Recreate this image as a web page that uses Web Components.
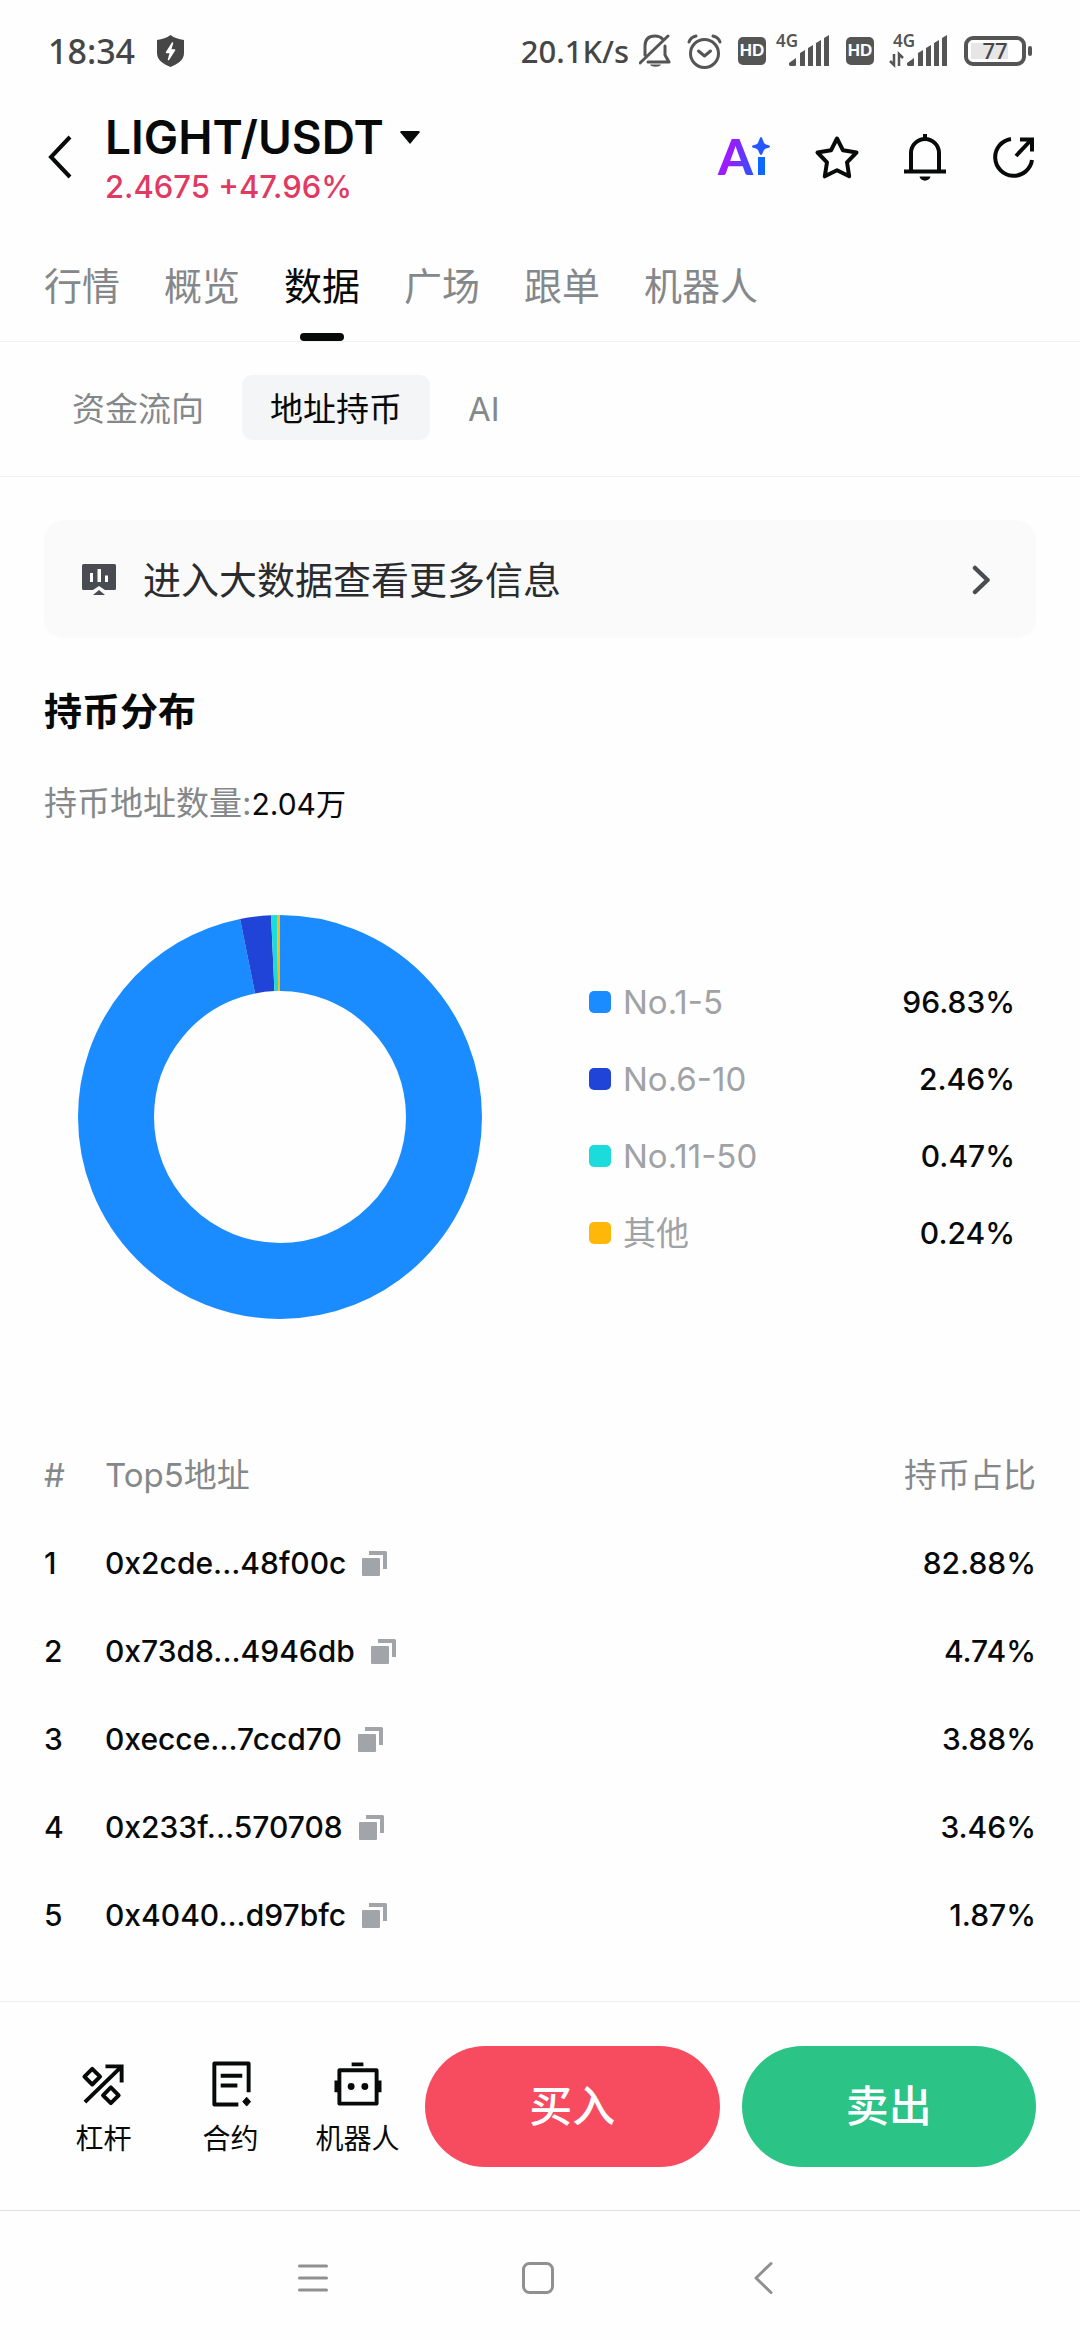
<!DOCTYPE html>
<html lang="zh-CN">
<head>
<meta charset="utf-8">
<meta name="viewport" content="width=device-width, initial-scale=1">
<title>LIGHT/USDT</title>
<style>
  body { margin: 0; background: #fefefe; color: #080a0a; font-family: Inter, "Noto Sans CJK SC", sans-serif; }
</style>
</head>
<body>
<app-screen>
  <status-bar slot="top" time="18:34" speed="20.1K/s" battery="77"></status-bar>
  <pair-header slot="top" price="2.4675" change="+47.96%">LIGHT/USDT</pair-header>
  <tab-bar slot="top">
    <tab-item>行情</tab-item>
    <tab-item>概览</tab-item>
    <tab-item selected>数据</tab-item>
    <tab-item>广场</tab-item>
    <tab-item>跟单</tab-item>
    <tab-item>机器人</tab-item>
  </tab-bar>
  <pill-bar slot="top">
    <pill-item>资金流向</pill-item>
    <pill-item selected>地址持币</pill-item>
    <pill-item>AI</pill-item>
  </pill-bar>

  <promo-link>进入大数据查看更多信息</promo-link>
  <holder-section count="2.04万">
    <span slot="title">持币分布</span>
    <span slot="label">持币地址数量:</span>
    <share-row value="96.83" color="#1a8cff">No.1-5</share-row>
    <share-row value="2.46" color="#2043d8">No.6-10</share-row>
    <share-row value="0.47" color="#1bdbdb">No.11-50</share-row>
    <share-row value="0.24" color="#ffb70a">其他</share-row>
  </holder-section>
  <address-table></address-table>

  <trade-bar slot="bottom">
    <quick-action icon="lever">杠杆</quick-action>
    <quick-action icon="contract">合约</quick-action>
    <quick-action icon="robot">机器人</quick-action>
    <trade-button slot="trade" kind="buy">买入</trade-button>
    <trade-button slot="trade" kind="sell">卖出</trade-button>
  </trade-bar>
  <system-nav slot="bottom"></system-nav>
</app-screen>

<script>
const RESET = `
  :host, *, *::before, *::after { box-sizing: border-box; }
  button, a { font: inherit; color: inherit; background: none; border: 0; margin: 0; padding: 0; text-decoration: none; cursor: pointer; }
  svg { display: block; flex: none; }
`;

function define(name, render) {
  customElements.define(name, class extends HTMLElement {
    connectedCallback() {
      if (this.shadowRoot) return;
      const template = document.createElement('template');
      template.innerHTML = render(this);
      this.attachShadow({ mode: 'open' }).append(template.content.cloneNode(true));
    }
  });
}

define('app-screen', () => `
  <style>${RESET}
    :host { display: flex; flex-direction: column; min-height: 100vh; }
    main { flex: 1; padding: 43px 44px 0; }
  </style>
  <header><slot name="top"></slot></header>
  <main><slot></slot></main>
  <footer><slot name="bottom"></slot></footer>`);

/* ---------- status bar ---------- */
define('status-bar', el => `
  <style>${RESET}
    :host { display: flex; align-items: center; justify-content: space-between; height: 102px; padding: 0 48px;
      color: #464646; font: 500 34px/40px "Noto Sans", sans-serif; }
    .group { display: flex; align-items: center; gap: 16px; }
    .tight { display: flex; align-items: center; gap: 10px; }
    .left { gap: 22px; }
    .speed { font-size: 31px; }
  </style>
  <div class="group left">
    <span>${el.getAttribute('time')}</span>
    <svg width="27" height="32" viewBox="0 0 27 32"><path d="M13.500 0c4 3 8 4.300 13.500 5v13c0 7-6 11-13.500 14C6 29 0 25 0 18V5c5.500-.7 9.500-2 13.500-5z" fill="#464646"/><path d="M15.500 8l-6 9.500h4l-2 7 6-9.500h-4z" fill="#fff" stroke="#fff" stroke-width="1.500" stroke-linejoin="round"/></svg>
  </div>
  <div class="group">
    <div class="tight">
      <span class="speed">${el.getAttribute('speed')}</span>
      <svg width="32" height="34" viewBox="0 0 32 34" fill="none" stroke="#555" stroke-width="3"><path d="M6 21V12C6 5 10 2 16 2c3.500 0 6 1.200 7.600 3M26 12v9l4 7H9M1 29L29 2" stroke-linecap="round" stroke-linejoin="round"/><path d="M11 30.500h11c-1 3-10 3-11 0z" fill="#555" stroke="none"/></svg>
    </div>
    <svg width="35" height="35" viewBox="0 0 35 35" fill="none" stroke="#555" stroke-width="3" stroke-linecap="round" stroke-linejoin="round"><circle cx="17.500" cy="19.500" r="14"/><path d="M11.500 17l6 5 6-5M2 8c1-3 3-5 7-6M33 8c-1-3-3-5-7-6"/></svg>
    <div class="tight"><hd-badge></hd-badge><cell-signal></cell-signal></div>
    <div class="tight"><hd-badge></hd-badge><cell-signal data></cell-signal></div>
    <svg width="68" height="30" viewBox="0 0 68 30"><rect x="2" y="2" width="58" height="26" rx="7" fill="none" stroke="#555" stroke-width="4"/><rect x="7" y="7" width="37" height="16" rx="1" fill="#e6e6e6"/><rect x="64" y="10" width="4" height="10" rx="2" fill="#555"/><text x="31" y="23" text-anchor="middle" font-family="Noto Sans" font-size="22" fill="#464646">${el.getAttribute('battery')}</text></svg>
  </div>`);

define('hd-badge', () => `
  <style>${RESET}
    :host { display: grid; place-items: center; width: 28px; height: 28px; border-radius: 5px; background: #555;
      color: #fff; font: 700 17px/28px "Liberation Sans", sans-serif; }
  </style>HD`);

define('cell-signal', el => {
  const data = el.hasAttribute('data');
  const w = data ? 64 : 54;
  return `
  <style>${RESET} :host { display: block; }</style>
  <svg width="${w}" height="50" viewBox="${data ? -10 : 0} -8 ${w} 50" fill="#555">
    <text x="${data ? -1 : 0}" y="13" font-family="Noto Sans" font-weight="600" font-size="17">4G</text>
    <path d="M13 31v-2l7-5v7a1 1 0 0 1-1 1h-5zM24 19l5-3v16h-5zM32 14l5-3v21h-5zM40 9l5-3v26h-5zM48 4l5-3v31h-5z"/>
    ${data ? '<path d="M0 20v11l-4-4M5 32V20l4 4" fill="none" stroke="#555" stroke-width="2.500"/>' : ''}
  </svg>`;
});

/* ---------- pair header ---------- */
define('pair-header', el => `
  <style>${RESET}
    :host { display: flex; align-items: center; height: 110px; padding: 0 44px 0 46px; }
    .back { padding-right: 31px; }
    .pair { flex: 1; }
    .name { display: flex; align-items: center; gap: 16px; font-size: 46px; font-weight: 600; line-height: 60px; }
    .quote { font-size: 31px; font-weight: 500; line-height: 40px; color: #e03a62; }
    .tools { display: flex; align-items: center; gap: 44px; }
    .tools button { display: block; }
  </style>
  <button class="back" aria-label="返回"><svg width="28" height="46" viewBox="0 0 28 46" fill="none" stroke="#080a0a" stroke-width="4"><path d="M24 3L5 23l19 20"/></svg></button>
  <div class="pair">
    <button class="name"><slot></slot><svg width="20" height="13" viewBox="0 0 20 13"><path d="M1 0h18l1 1-10 12L0 1z" fill="#080a0a"/></svg></button>
    <div class="quote">${el.getAttribute('price')} ${el.getAttribute('change')}</div>
  </div>
  <div class="tools">
    <button aria-label="Ai"><svg width="54" height="64" viewBox="-2 -9 54 64"><defs><linearGradient id="g" gradientUnits="userSpaceOnUse" x1="0" y1="20" x2="48" y2="28"><stop offset=".25" stop-color="#9a1cff"/><stop offset=".9" stop-color="#0e62ff"/></linearGradient></defs><text x="0" y="41" font-family="Lato" font-weight="900" font-size="50" fill="url(#g)">A</text><rect x="40" y="23" width="7" height="18" fill="#0e68ff"/><path d="M43 3c1.500 0 2 5 3.500 6.500S52 11 52 12.500s-4 1.500-5.500 3S44.500 21 43 21s-2-4-3.500-5.500-5.500-1.500-5.500-3 4-1.500 5.500-3S41.500 3 43 3z" fill="#2457ff"/></svg></button>
    <button aria-label="收藏"><svg width="46" height="46" viewBox="0 0 46 46" fill="none" stroke="#080a0a" stroke-width="4" stroke-linejoin="round"><path d="M23 4.500l6 11.800 13.500 2.200-9.500 9.800 2.200 14L23 36.300l-12.200 6 2.200-14-9.500-9.800L17 16.300z"/></svg></button>
    <button aria-label="提醒"><svg width="42" height="48" viewBox="0 0 42 48" fill="none" stroke="#080a0a" stroke-width="4"><path d="M7 38V20a14 14 0 0 1 28 0v18M0 38.500h42M21 1v6"/><path d="M15.500 43.500h11c-1 5.500-10 5.500-11 0z" fill="#080a0a" stroke="none"/></svg></button>
    <button aria-label="分享"><svg width="46" height="46" viewBox="0 0 46 46" fill="none" stroke="#080a0a" stroke-width="4"><path d="M21 5A18.500 18.500 0 1 0 42 26M26 22L41 6M30 5.500h12v12"/></svg></button>
  </div>`);

/* ---------- tabs ---------- */
define('tab-bar', () => `
  <style>${RESET}
    :host { display: block; border-bottom: 1px solid #eeeff0; }
    nav { display: flex; gap: 44px; padding: 48px 44px 0; }
  </style>
  <nav><slot></slot></nav>`);

define('tab-item', () => `
  <style>${RESET}
    :host { display: block; color: #85888a; }
    :host([selected]) { color: #080a0a; }
    button { display: flex; flex-direction: column; align-items: center; gap: 21px; font-size: 38px; line-height: 52px; white-space: nowrap; }
    button::after { content: ""; width: 44px; height: 8px; border-radius: 4px; }
    :host([selected]) button::after { background: #080a0a; }
  </style>
  <button><slot></slot></button>`);

define('pill-bar', () => `
  <style>${RESET}
    :host { display: block; border-bottom: 1px solid #eeeff0; }
    nav { display: flex; gap: 10px; padding: 33px 44px 36px; }
  </style>
  <nav><slot></slot></nav>`);

define('pill-item', () => `
  <style>${RESET}
    :host { display: block; color: #85888a; }
    button { padding: 3px 28px 0; border-radius: 10px; font-size: 33px; line-height: 62px; white-space: nowrap; }
    :host([selected]) { color: #080a0a; }
    :host([selected]) button { background: #f3f5f6; }
  </style>
  <button><slot></slot></button>`);

/* ---------- link card ---------- */
define('promo-link', () => `
  <style>${RESET}
    :host { display: block; }
    a { display: flex; align-items: center; gap: 27px; height: 118px; padding: 2px 44px 0 38px; border-radius: 20px; background: #fafafa; color: #2a2c2f; font-size: 38px; line-height: 52px; }
    span { flex: 1; }
  </style>
  <a href="#">
    <svg width="34" height="32" viewBox="0 0 34 32"><path d="M1.500 0h31A1.500 1.500 0 0 1 34 1.500v23A1.500 1.500 0 0 1 32.500 26H23l-6-4-6 4H1.500A1.500 1.500 0 0 1 0 24.500v-23A1.500 1.500 0 0 1 1.500 0z" fill="#494b52"/><path d="M17 26l6 5H11z" fill="#494b52"/><path d="M8 9h3v9H8zM15.500 5h3.500v13h-3.500zM23 11.500h3V18h-3z" fill="#fff"/></svg>
    <span><slot></slot></span>
    <svg width="20" height="30" viewBox="0 0 20 30" fill="none" stroke="#494b4f" stroke-width="4.500" stroke-linecap="round" stroke-linejoin="round"><path d="M3 3l12.500 12L3 27"/></svg>
  </a>`);

/* ---------- distribution chart ---------- */
define('holder-section', el => {
  let start = 0;
  const arcs = [...el.querySelectorAll('share-row')].map(row => {
    const value = Number(row.getAttribute('value'));
    const arc = `<circle cx="202" cy="202" r="164" pathLength="100" stroke="${row.getAttribute('color')}" stroke-dasharray="${value} ${100 - value}" stroke-dashoffset="${-start}"/>`;
    start += value;
    return arc;
  }).join('');
  return `
  <style>${RESET}
    :host { display: block; }
    h2 { margin: 49px 0 0; font-size: 38px; font-weight: 700; line-height: 48px; }
    p { display: flex; align-items: baseline; height: 40px; margin: 48px 0 0; font-size: 33px; line-height: 40px; color: #85888a; }
    b { font-size: 30px; font-weight: 400; color: #080a0a; }
    .chart { display: flex; align-items: center; justify-content: space-between; gap: 107px; margin-top: 92px; padding: 0 21px 0 34px; }
    .rows { flex: 1; display: grid; }
  </style>
  <h2><slot name="title"></slot></h2>
  <p><slot name="label"></slot><b>${el.getAttribute('count')}</b></p>
  <div class="chart">
    <svg width="404" height="404" viewBox="0 0 404 404" fill="none" stroke-width="76"><g transform="rotate(-90 202 202)">${arcs}</g></svg>
    <div class="rows"><slot></slot></div>
  </div>`;
});

define('share-row', el => `
  <style>${RESET}
    :host { display: flex; align-items: center; gap: 12px; height: 77px; font-size: 33px; line-height: 40px; }
    i { width: 22px; height: 22px; border-radius: 5px; background: ${el.getAttribute('color')}; }
    .label { flex: 1; color: #a0a2a5; }
    .value { font-size: 30px; font-weight: 500; }
  </style>
  <i></i><span class="label"><slot></slot></span><span class="value">${el.getAttribute('value')}%</span>`);

/* ---------- top addresses ---------- */
const HOLDERS = [
  ['0x2cde...48f00c', '82.88%'],
  ['0x73d8...4946db', '4.74%'],
  ['0xecce...7ccd70', '3.88%'],
  ['0x233f...570708', '3.46%'],
  ['0x4040...d97bfc', '1.87%'],
];

define('address-table', () => `
  <style>${RESET}
    :host { display: block; margin-top: 112px; }
    table { width: 100%; border-collapse: collapse; line-height: 40px; }
    th, td { height: 88px; padding: 0; text-align: left; font-size: 30px; font-weight: 500; }
    th { font-size: 33px; font-weight: 400; color: #85888a; }
    th:first-child { width: 61px; }
    th:last-child, td:last-child { text-align: right; }
    .addr { display: flex; align-items: center; gap: 16px; }
  </style>
  <table>
    <thead><tr><th>#</th><th>Top5地址</th><th>持币占比</th></tr></thead>
    <tbody>${HOLDERS.map(([addr, share], i) => `
      <tr><td>${i + 1}</td><td><div class="addr">${addr}<copy-button></copy-button></div></td><td>${share}</td></tr>`).join('')}
    </tbody>
  </table>`);

define('copy-button', () => `
  <style>${RESET} :host { display: block; } button { display: block; }</style>
  <button aria-label="复制"><svg width="25" height="26" viewBox="0 0 25 26" fill="#a1a4a8"><rect x="0" y="8" width="18" height="18" rx="1"/><path d="M7 1h16.500A1.500 1.500 0 0 1 25 2.500V19h-4V5H7z"/></svg></button>`);

/* ---------- bottom bars ---------- */
define('trade-bar', () => `
  <style>${RESET}
    :host { display: flex; align-items: center; height: 209px; padding: 0 44px 0 40px; border-top: 1px solid #eeeff0; }
    .actions { display: grid; grid-template-columns: repeat(3, 127px); margin-right: 4px; }
    .trade { flex: 1; display: flex; gap: 22px; }
  </style>
  <div class="actions"><slot></slot></div>
  <div class="trade"><slot name="trade"></slot></div>`);

const ACTION_ICONS = {
  lever: '<path d="M5 43L42 7M26 6.500h16.500V23" /><path d="M12.500 9l8 8-8 8-8-8zM31.500 28l8 8-8 8-8-8z" stroke-linejoin="round"/>',
  contract: '<path d="M42.500 33V3.500h-35v42H32M14 16h22M14 26h17" stroke-linejoin="round"/><path d="M40.500 38l4 4.500-4 4.500-4-4.500z" fill="#080a0a" stroke="#080a0a" stroke-width="1"/>',
  robot: '<path d="M5.500 10.500h38v34h-38zM18 4.500h12M2.500 21v12M46.500 21v12" stroke-linejoin="round"/><circle cx="17.500" cy="27" r="3.500" fill="#080a0a" stroke="none"/><circle cx="31.500" cy="27" r="3.500" fill="#080a0a" stroke="none"/>',
};

define('quick-action', el => `
  <style>${RESET}
    :host { display: block; }
    button { display: flex; flex-direction: column; align-items: center; gap: 11px; width: 100%; padding-top: 7px; font-size: 28px; line-height: 40px; white-space: nowrap; }
  </style>
  <button><svg width="48" height="48" viewBox="0 0 49 49" fill="none" stroke="#080a0a" stroke-width="4">${ACTION_ICONS[el.getAttribute('icon')]}</svg><span><slot></slot></span></button>`);

define('trade-button', () => `
  <style>${RESET}
    :host { display: block; flex: 1; --fill: #f74c60; }
    :host([kind="sell"]) { --fill: #2bc386; }
    button { display: block; width: 100%; height: 121px; padding-bottom: 6px; border-radius: 61px; background: var(--fill); color: #fff; font-size: 43px; font-weight: 500; }
  </style>
  <button><slot></slot></button>`);

define('system-nav', () => `
  <style>${RESET}
    :host { display: flex; height: 130px; padding: 4px 205px 0 201px; border-top: 1px solid #e0e0e0; }
    button { flex: 1; display: grid; place-items: center; }
  </style>
  <button aria-label="菜单"><svg width="32" height="34" viewBox="0 0 32 34" fill="none" stroke="#909090" stroke-width="3" stroke-linecap="round"><path d="M2.500 5h27M2.500 17h27M2.500 29h27"/></svg></button>
  <button aria-label="主页"><svg width="34" height="34" viewBox="0 0 34 34" fill="none" stroke="#909090" stroke-width="3"><rect x="2.500" y="2.500" width="29" height="29" rx="6"/></svg></button>
  <button aria-label="返回"><svg width="20" height="34" viewBox="0 0 20 34" fill="none" stroke="#909090" stroke-width="3" stroke-linecap="round" stroke-linejoin="round"><path d="M18 2.500L3 17l15 14.500"/></svg></button>`);
</script>
</body>
</html>
